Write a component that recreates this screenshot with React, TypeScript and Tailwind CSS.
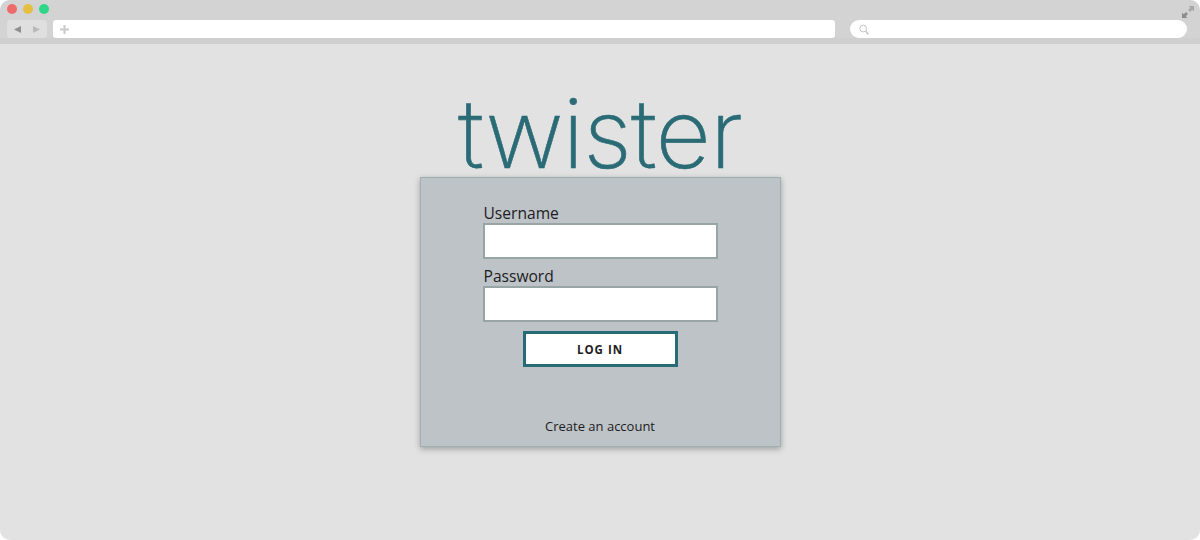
import { useState } from "react";

const font = "font-['Open_Sans','Noto_Sans',sans-serif]";

function TrafficLights() {
  return (
    <div className="flex gap-[6px] pl-[7px] pt-1">
      <span className="w-[10px] h-[10px] rounded-full bg-[#ee6b6b]" />
      <span className="w-[10px] h-[10px] rounded-full bg-[#e5bf42]" />
      <span className="w-[10px] h-[10px] rounded-full bg-[#2fd68a]" />
    </div>
  );
}

function BrowserBar() {
  return (
    <div className="relative h-[44px] shrink-0 bg-[#d3d3d3] border-b-[6px] border-[#cfcfcf]">
      <TrafficLights />
      <div className="flex items-center pl-[7px] pr-[13px] mt-[6px] h-[18px]">
        <div className="flex items-center w-[40px] h-[18px] rounded-[3px] bg-[#dfdfdf]">
          <svg width="40" height="18" viewBox="0 0 40 18">
            <path d="M7 9.5 14 6v7z" fill="#8f8f8f" />
            <path d="M33 9.5 26 6v7z" fill="#b9b9b9" />
          </svg>
        </div>
        <div className="flex items-center ml-[6px] w-[782px] h-[18px] rounded-[3px] bg-white pl-[7px]">
          <svg width="9" height="9" viewBox="0 0 9 9">
            <path d="M3.5 0h2v3.5H9v2H5.5V9h-2V5.5H0v-2h3.5z" fill="#c9c9c9" />
          </svg>
        </div>
        <div className="flex items-center ml-[15px] flex-1 h-[18px] rounded-full bg-white pl-[9px]">
          <svg width="10" height="11" viewBox="0 0 10 11" fill="none" stroke="#c4c4c4">
            <circle cx="4.2" cy="4.5" r="3.4" />
            <path d="m6.8 7.2 2.6 3" strokeWidth="1.5" />
          </svg>
        </div>
      </div>
      <svg className="absolute right-[6px] top-[6px]" width="12" height="12" viewBox="0 0 12 12">
        <path d="M6.5 0H12v5.5L10.2 3.7 8 6 6 4l2.3-2.2z" fill="#a8a8a8" />
        <path d="M5.5 12H0V6.5l1.8 1.8L4 6l2 2-2.3 2.2z" fill="#8d8d8d" />
      </svg>
    </div>
  );
}

function Field({ label, value, onChange, type }: { label: string; value: string; onChange: (v: string) => void; type: string }) {
  return (
    <label className="block">
      <span className="block pl-px text-[15.6px] leading-[20px] text-[#1c1c22]">{label}</span>
      <input
        type={type}
        value={value}
        onChange={(e) => onChange(e.target.value)}
        className="block w-[235px] h-[36px] bg-white border-2 border-[#98a5a5] outline-none"
      />
    </label>
  );
}

export default function App() {
  const [username, setUsername] = useState("");
  const [password, setPassword] = useState("");

  return (
    <div className={`w-[1200px] h-[540px] bg-white ${font}`}>
      <div className="flex flex-col h-full rounded-[10px] overflow-hidden bg-[#e2e2e2]">
        <BrowserBar />
        <main className="flex flex-col items-center">
          <h1 className="flex items-end justify-center h-[133px] w-full text-[96px] leading-[88px] font-extralight tracking-[-0.8px] text-[#2a6b76] [-webkit-text-stroke:0.6px_#2a6b76] font-['Inter',sans-serif]">
            twister
          </h1>
          <div className="flex flex-col items-center w-[361px] h-[270px] bg-[#bec3c7] border border-[#9fb0b0] shadow-[0_2px_6px_rgba(0,0,0,0.3)]">
            <form className="flex flex-col gap-[7px] w-[235px] mt-[25px]" onSubmit={(e) => e.preventDefault()}>
              <Field label="Username" type="text" value={username} onChange={setUsername} />
              <Field label="Password" type="password" value={password} onChange={setPassword} />
              <button
                type="submit"
                className="self-center w-[155px] h-[36px] mt-[2px] pt-px bg-white border-[3px] border-[#276b77] text-[11.5px] font-bold tracking-[1px] text-[#1c1c22]"
              >
                LOG IN
              </button>
            </form>
            <a href="#" className="mt-[49px] text-[13px] leading-[20px] text-[#1c1c22]">
              Create an account
            </a>
          </div>
        </main>
      </div>
    </div>
  );
}
